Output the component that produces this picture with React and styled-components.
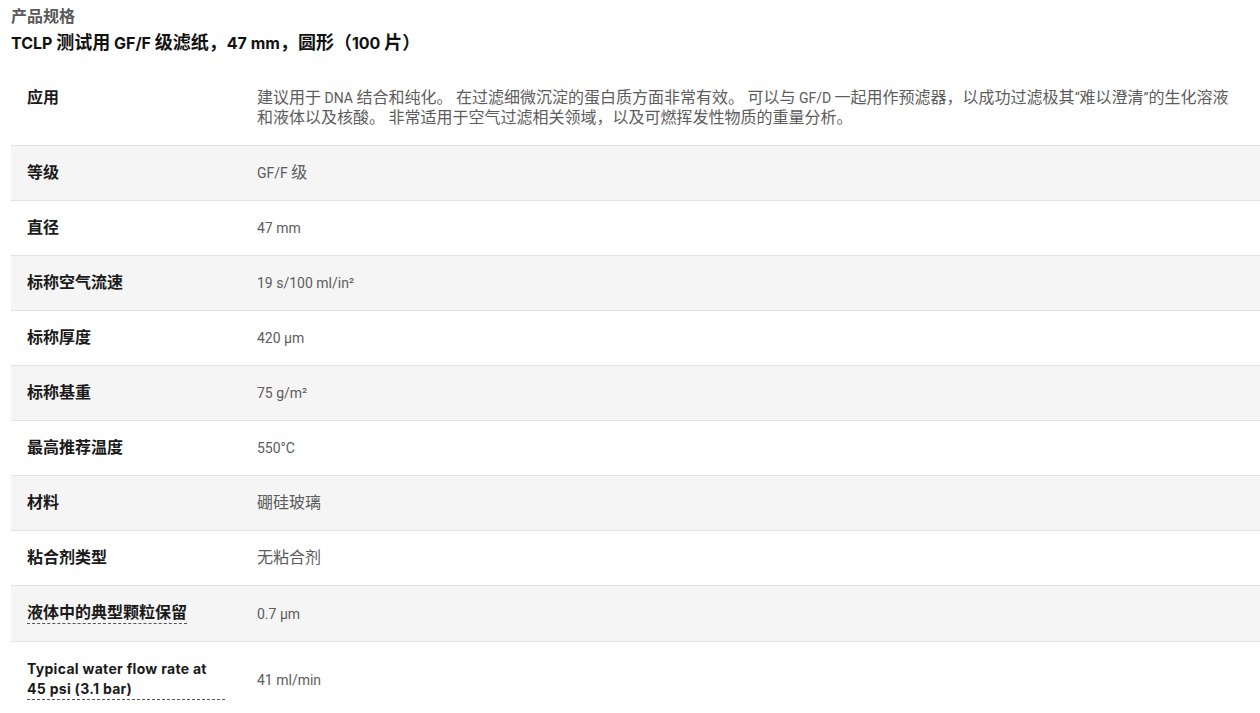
import styled, {createGlobalStyle} from 'styled-components';

const GlobalStyle = createGlobalStyle`
  body {
    margin: 0;
    background: #fff;
    font-family: Roboto, "Noto Sans CJK SC", sans-serif;
    color: #1a1a1a;
  }
`;

// Han characters sit a size above the Latin text around them
const Han = styled.span`
  font-family: "Noto Sans CJK SC", sans-serif;
  font-size: ${(p) => p.$scale || 1.143}em;
  line-height: 1;
  letter-spacing: 0;
`;

const HAN_RE = /([\u3000-\u303f\u3400-\u9fff\uff00-\uffef]+)/;

function Mixed({text, scale}) {
  return text.split(HAN_RE).map((part, i) =>
    i % 2 === 1 ? <Han key={i} $scale={scale}>{part}</Han> : part
  );
}

const Page = styled.div`
  padding: 7px 0 0 11px;
`;

const Eyebrow = styled.div`
  font-family: Inter, "Noto Sans CJK SC", sans-serif;
  font-size: 14px;
  line-height: 20px;
  font-weight: 700;
  color: #595959;
`;

const Title = styled.h2`
  margin: 4px 0 16px;
  font-family: Inter, "Noto Sans CJK SC", sans-serif;
  font-size: 16px;
  line-height: 24px;
  font-weight: 700;
  color: #111;
`;

const Table = styled.div`
  display: flex;
  flex-direction: column;
`;

const Row = styled.div`
  display: grid;
  grid-template-columns: 246px 1fr;
  align-items: ${(p) => (p.$top ? 'start' : 'center')};
  padding: 17px 0;
  background: ${(p) => (p.$shade ? '#f5f5f5' : '#fff')};

  &:not(:last-child) {
    border-bottom: 1px solid #e3e3e3;
  }
`;

const Label = styled.div`
  padding: 0 32px 0 16px;
  font-family: Inter, "Noto Sans CJK SC", sans-serif;
  font-size: 14px;
  line-height: 20px;
  font-weight: 700;
  letter-spacing: 0.3px;
  color: #1a1a1a;
`;

const Term = styled.span`
  display: inline-block;
  vertical-align: top;
  border-bottom: 1px dashed #555;
`;

const Value = styled.div`
  padding-right: 16px;
  font-size: 14px;
  line-height: 20px;
  color: #5c5c5c;
`;

const specs = [
  {
    label: '应用',
    value:
      '建议用于 DNA 结合和纯化。 在过滤细微沉淀的蛋白质方面非常有效。 可以与 GF/D 一起用作预滤器，以成功过滤极其“难以澄清”的生化溶液和液体以及核酸。 非常适用于空气过滤相关领域，以及可燃挥发性物质的重量分析。',
    top: true,
  },
  {label: '等级', value: 'GF/F 级'},
  {label: '直径', value: '47 mm'},
  {label: '标称空气流速', value: '19 s/100 ml/in²'},
  {label: '标称厚度', value: '420 µm'},
  {label: '标称基重', value: '75 g/m²'},
  {label: '最高推荐温度', value: '550°C'},
  {label: '材料', value: '硼硅玻璃'},
  {label: '粘合剂类型', value: '无粘合剂'},
  {label: '液体中的典型颗粒保留', value: '0.7 µm', term: true},
  {label: 'Typical water flow rate at 45 psi (3.1 bar)', value: '41 ml/min', term: true},
];

export default function App() {
  return (
    <Page>
      <GlobalStyle />
      <Eyebrow><Mixed text="产品规格" /></Eyebrow>
      <Title><Mixed text="TCLP 测试用 GF/F 级滤纸，47 mm，圆形（100 片）" scale={1.125} /></Title>
      <Table>
        {specs.map((s, i) => {
          const label = <Mixed text={s.label} />;
          return (
            <Row key={s.label} $shade={i % 2 === 1} $top={s.top}>
              <Label>{s.term ? <Term>{label}</Term> : label}</Label>
              <Value><Mixed text={s.value} /></Value>
            </Row>
          );
        })}
      </Table>
    </Page>
  );
}
